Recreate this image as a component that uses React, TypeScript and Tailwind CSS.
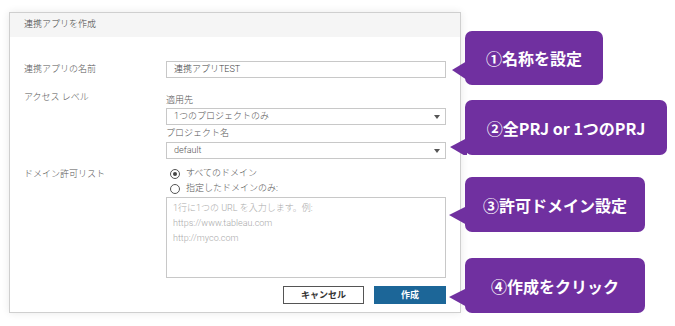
import React from "react";

const jp = { fontFamily: 'Roboto, "Noto Sans CJK JP", "Noto Sans", sans-serif' };
const jpBold = { fontFamily: '"Noto Sans CJK JP", "Noto Sans", sans-serif' };

function Arrow() {
  return (
    <svg width="6" height="4" viewBox="0 0 6 4" className="mr-[5px]">
      <path d="M0 0 L6 0 L3 4 Z" fill="#555" />
    </svg>
  );
}

function Callout({
  left,
  top,
  width,
  height,
  tipX,
  tipY,
  text,
}: {
  left: number;
  top: number;
  width: number;
  height: number;
  tipX: number;
  tipY: number;
  text: string;
}) {
  const relTipY = tipY - top;
  const w = left - tipX + 2;
  return (
    <div className="absolute" style={{ left, top, width, height }}>
      <svg
        className="absolute"
        style={{ left: tipX - left, top: 0 }}
        width={w}
        height={height}
        viewBox={`0 0 ${w} ${height}`}
      >
        <path d={`M${w} ${relTipY - 9} L0 ${relTipY} L${w} ${relTipY + 10} Z`} fill="#7030a0" />
      </svg>
      <div
        className="flex h-full w-full items-center justify-center rounded-[7px] bg-[#7030a0] text-[16px] font-bold text-white"
        style={jpBold}
      >
        {text}
      </div>
    </div>
  );
}

export default function App() {
  return (
    <div className="relative h-[326px] w-[675px] overflow-hidden bg-white font-light" style={jp}>
      <div className="ml-[9px] mt-[12px] flex h-[301px] w-[452px] flex-col border border-[#cfcfcf] bg-white shadow-[0_0_8px_rgba(0,0,0,0.09)]">
        <div className="flex h-[24px] items-center bg-[#f5f5f5] px-[14px] text-[9px] text-[#444]">
          連携アプリを作成
        </div>
        <div className="flex flex-col pl-[14px] pr-[14px] text-[9px] text-[#555]">
          {/* name row */}
          <div className="mt-[24px] flex items-center">
            <div className="w-[142px]">連携アプリの名前</div>
            <div className="flex h-[17px] w-[280px] items-center border border-[#c8c8c8] pl-[7px] text-[#444]">
              連携アプリTEST
            </div>
          </div>
          {/* access row */}
          <div className="mt-[13px] flex items-start">
            <div className="w-[142px] leading-[12px]">アクセス レベル</div>
            <div className="flex w-[280px] flex-col pt-[3px]">
              <div className="leading-[12px]">適用先</div>
              <div className="mt-[2px] flex h-[17px] items-center justify-between border border-[#c8c8c8] pl-[7px]">
                <span>1つのプロジェクトのみ</span>
                <Arrow />
              </div>
              <div className="mt-[2px] leading-[12px]">プロジェクト名</div>
              <div className="mt-[3px] flex h-[17px] items-center justify-between border border-[#c8c8c8] pl-[7px]">
                <span>default</span>
                <Arrow />
              </div>
            </div>
          </div>
          {/* domain row */}
          <div className="mt-[9px] flex items-start">
            <div className="w-[142px] leading-[12px]">ドメイン許可リスト</div>
            <div className="flex w-[280px] flex-col">
              <div className="flex h-[12px] items-center pl-[4px]">
                <span className="mr-[6px] flex h-[10px] w-[10px] items-center justify-center rounded-full border border-[#555]">
                  <span className="h-[4px] w-[4px] rounded-full bg-[#444]" />
                </span>
                すべてのドメイン
              </div>
              <div className="mt-[3px] flex h-[12px] items-center pl-[4px]">
                <span className="mr-[6px] h-[10px] w-[10px] rounded-full border border-[#555]" />
                指定したドメインのみ:
              </div>
              <div className="mt-[2px] flex h-[81px] flex-col border border-[#c8c8c8] pl-[6px] pt-[3px] leading-[15px] text-[#aaa]">
                <div>1行に1つの URL を入力します。例:</div>
                <div>https://www.tableau.com</div>
                <div>http://myco.com</div>
              </div>
            </div>
          </div>
          {/* buttons */}
          <div className="mt-[8px] flex justify-end gap-[10px]">
            <div
              className="flex h-[18px] w-[81px] items-center justify-center border border-[#555] font-bold text-[#333]"
              style={jpBold}
            >
              キャンセル
            </div>
            <div
              className="flex h-[18px] w-[72px] items-center justify-center bg-[#1c6698] font-bold text-white"
              style={jpBold}
            >
              作成
            </div>
          </div>
        </div>
      </div>

      <Callout left={465} top={31} width={138} height={54} tipX={452} tipY={70} text="①名称を設定" />
      <Callout left={465} top={100} width={202} height={55} tipX={450} tipY={147} text="②全PRJ or 1つのPRJ" />
      <Callout left={465} top={177} width={180} height={55} tipX={449} tipY={215} text="③許可ドメイン設定" />
      <Callout left={465} top={258} width={180} height={55} tipX={449} tipY={297} text="④作成をクリック" />
    </div>
  );
}
